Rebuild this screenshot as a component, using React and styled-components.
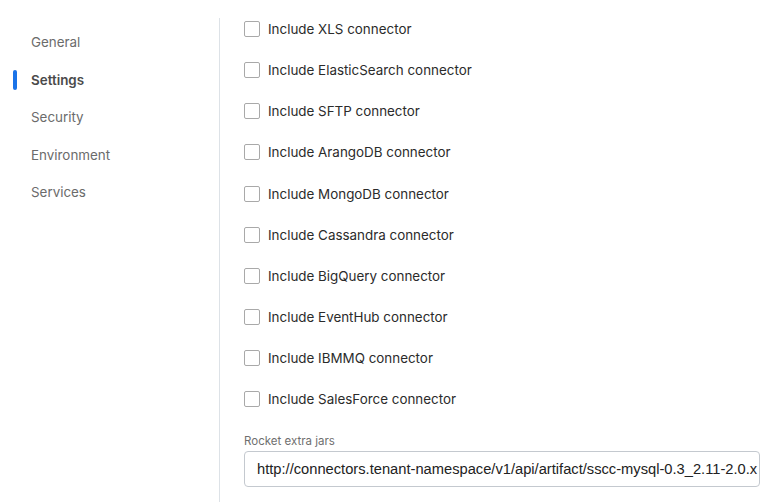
import React from "react";
import styled, { createGlobalStyle } from "styled-components";

const GlobalStyle = createGlobalStyle`
  body {
    margin: 0;
    background: #ffffff;
    font-family: Inter, "Noto Sans", sans-serif;
  }
`;

const Page = styled.div`
  display: flex;
  width: 770px;
  height: 502px;
  overflow: hidden;
  background: #ffffff;
`;

const Sidebar = styled.nav`
  width: 219px;
  margin-top: 18px;
  padding-top: 5.5px;
  border-right: 1px solid #dde2e7;
  display: flex;
  flex-direction: column;
  flex-shrink: 0;
`;

const NavItem = styled.div`
  display: flex;
  align-items: center;
  height: 37.5px;
  font-size: 13.4px;
  color: ${(p) => (p.$active ? "#4a4a4a" : "#6b6b6b")};
  font-weight: ${(p) => (p.$active ? 600 : 400)};
`;

const Indicator = styled.span`
  width: 4px;
  height: 20px;
  margin-left: 13px;
  margin-right: 14px;
  border-radius: 2px;
  background: ${(p) => (p.$active ? "#1a73e8" : "transparent")};
`;

const Content = styled.div`
  flex: 1;
  padding: 8.5px 10px 0 24px;
  display: flex;
  flex-direction: column;
`;

const Row = styled.label`
  display: flex;
  align-items: center;
  gap: 8px;
  height: 41.15px;
  font-size: 13.4px;
  color: #2b2b2b;
`;

const Box = styled.span`
  width: 16px;
  height: 16px;
  box-sizing: border-box;
  border: 1px solid #a9a9a9;
  border-radius: 2px;
  background: #fff;
  flex-shrink: 0;
`;

const FieldLabel = styled.div`
  margin-top: 13.5px;
  font-size: 11.5px;
  line-height: 16px;
  color: #6f6f6f;
`;

const Input = styled.input`
  margin-top: 2px;
  width: 516px;
  height: 36px;
  box-sizing: border-box;
  border: 1px solid #c4c9cf;
  border-radius: 4px;
  padding: 0 0 0 12px;
  font-family: "Liberation Sans", Arial, sans-serif;
  font-size: 14.7px;
  color: #222;
  outline: none;
`;

const navItems = ["General", "Settings", "Security", "Environment", "Services"];

const connectors = [
  "XLS",
  "ElasticSearch",
  "SFTP",
  "ArangoDB",
  "MongoDB",
  "Cassandra",
  "BigQuery",
  "EventHub",
  "IBMMQ",
  "SalesForce",
];

export default function App() {
  return (
    <>
      <GlobalStyle />
      <Page>
        <Sidebar>
          {navItems.map((item) => (
            <NavItem key={item} $active={item === "Settings"}>
              <Indicator $active={item === "Settings"} />
              {item}
            </NavItem>
          ))}
        </Sidebar>
        <Content>
          {connectors.map((c) => (
            <Row key={c}>
              <Box />
              Include {c} connector
            </Row>
          ))}
          <FieldLabel>Rocket extra jars</FieldLabel>
          <Input
            readOnly
            value="http://connectors.tenant-namespace/v1/api/artifact/sscc-mysql-0.3_2.11-2.0.x"
          />
        </Content>
      </Page>
    </>
  );
}
